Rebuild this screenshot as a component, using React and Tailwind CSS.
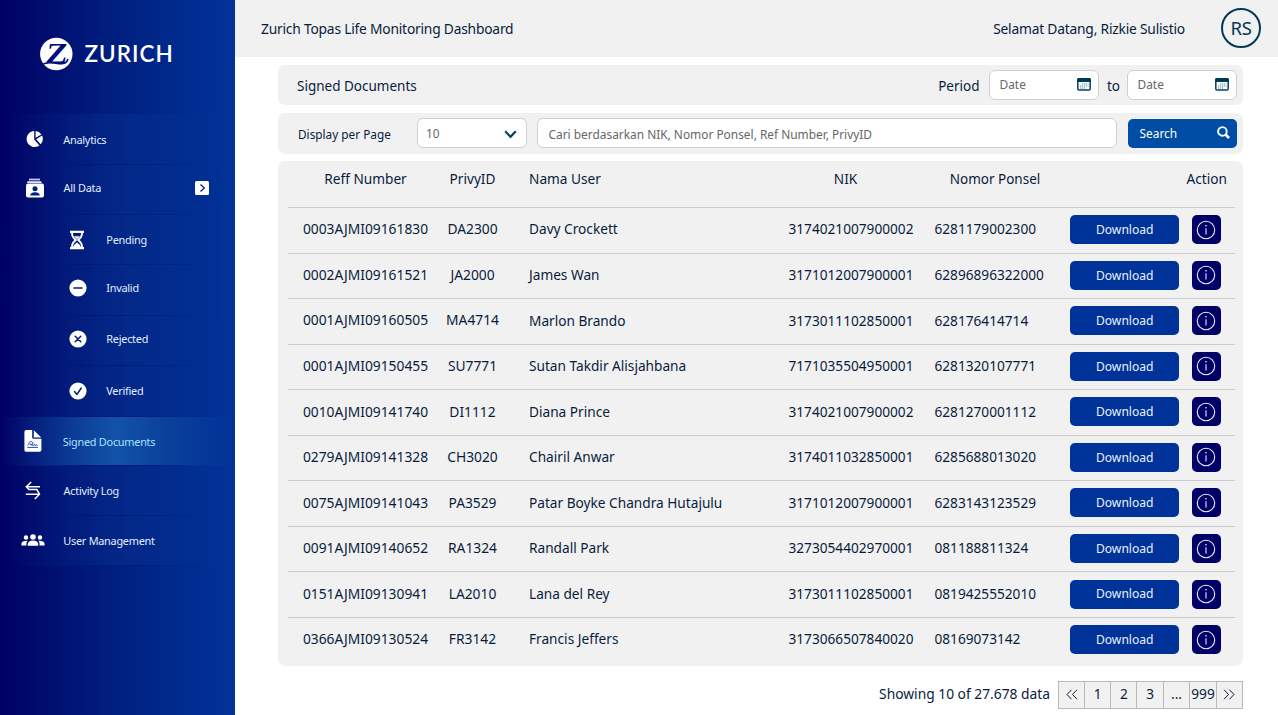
import React from "react";

const rows = [
  ["0003AJMI09161830", "DA2300", "Davy Crockett", "3174021007900002", "6281179002300"],
  ["0002AJMI09161521", "JA2000", "James Wan", "3171012007900001", "62896896322000"],
  ["0001AJMI09160505", "MA4714", "Marlon Brando", "3173011102850001", "628176414714"],
  ["0001AJMI09150455", "SU7771", "Sutan Takdir Alisjahbana", "7171035504950001", "6281320107771"],
  ["0010AJMI09141740", "DI1112", "Diana Prince", "3174021007900002", "6281270001112"],
  ["0279AJMI09141328", "CH3020", "Chairil Anwar", "3174011032850001", "6285688013020"],
  ["0075AJMI09141043", "PA3529", "Patar Boyke Chandra Hutajulu", "3171012007900001", "6283143123529"],
  ["0091AJMI09140652", "RA1324", "Randall Park", "3273054402970001", "081188811324"],
  ["0151AJMI09130941", "LA2010", "Lana del Rey", "3173011102850001", "0819425552010"],
  ["0366AJMI09130524", "FR3142", "Francis Jeffers", "3173066507840020", "08169073142"],
];

const GRID =
  "grid grid-cols-[155px_59px_27px_259.5px_146px_135px_109.5px_12.5px_29.5px] items-center";

function PieIcon() {
  return (
    <svg width="18" height="18" viewBox="0 0 18 18" fill="#fff">
      <path d="M8.2 1A8 8 0 1 0 13.4 15.4L8.2 9.6Z" />
      <path d="M9.6 1A8 8 0 0 1 15.4 4.4L9.6 7.8Z" />
      <path d="M16.1 5.6A8 8 0 0 1 14.6 14.2L10.2 9.2Z" />
    </svg>
  );
}

function AllDataIcon() {
  return (
    <svg width="20" height="20" viewBox="0 0 20 20">
      <rect x="4" y="0.6" width="11" height="1.8" fill="#c3c5e6" />
      <rect x="2.2" y="3.2" width="14.4" height="1.7" rx=".5" fill="#e4e6f6" />
      <rect x="1" y="5.6" width="18" height="14" rx="2" fill="#fff" />
      <circle cx="10" cy="10.800" r="2.500" fill="#001f80" />
      <path d="M5.200 17.600c.3-2.600 2-3.400 4.800-3.400s4.500.8 4.800 3.400Z" fill="#001f80" />
    </svg>
  );
}

function HourglassIcon() {
  return (
    <svg width="16" height="20" viewBox="0 0 16 20" fill="none" stroke="#fff">
      <path d="M1 1.800H15M1 18.200H15" strokeWidth="2.200" />
      <path d="M3 2.500C3 6.500 4 7.500 6.800 10C4 12.500 3 13.500 3 17.500M13 2.500C13 6.500 12 7.500 9.200 10C12 12.500 13 13.500 13 17.500" strokeWidth="1.900" />
      <path d="M5 6.200H11L8 9.300ZM4 17.500C4.500 14.500 6.500 14.200 8 12.200C9.500 14.200 11.500 14.500 12 17.500Z" fill="#fff" stroke="none" />
    </svg>
  );
}

function CircleIcon({ d }) {
  return (
    <svg width="18" height="18" viewBox="0 0 18 18">
      <circle cx="9" cy="9" r="8.600" fill="#fff" />
      <path d={d} fill="none" stroke="#001c7c" strokeWidth="1.500" strokeLinecap="round" strokeLinejoin="round" />
    </svg>
  );
}

function SignedIcon() {
  return (
    <svg width="18" height="22" viewBox="0 0 18 22">
      <path d="M2 0H8.200V7.500Q8.200 8.800 9.500 8.800H17.400V20Q17.400 21.800 15.600 21.800H2Q.4 21.800.4 20V2Q.4 0 2 0Z" fill="#fff" />
      <path d="M9.800 .3L17.300 7.600H9.800Z" fill="#fff" />
      <path d="M3.400 17.400H14M3.500 15.200C5 15 5 14 5 13C5.500 11 8.500 11 9 13C9 15 6 15.500 6.300 14.200C7 13 8.500 16 9.500 15.600C10 14 10.800 14 11 15.500C12 14.500 12.500 15.300 13.800 15.200" fill="none" stroke="#0b3a93" strokeWidth=".9" />
    </svg>
  );
}

function ActivityIcon() {
  return (
    <svg width="16" height="19" viewBox="0 0 16 19" fill="none" stroke="#fff" strokeWidth="1.500">
      <path d="M15 5.800H1.500M6.200 1L1.300 5.800L4 8.600H11.800L14.500 13.200L9.800 18M.8 13.200H14.500" />
    </svg>
  );
}

function UsersIcon() {
  return (
    <svg width="24" height="12" viewBox="0 0 24 12" fill="#fff">
      <circle cx="12" cy="3" r="2.800" />
      <circle cx="5" cy="3.500" r="2.200" />
      <circle cx="19" cy="3.500" r="2.200" />
      <path d="M6.800 11.800V10.200C6.800 7.800 9 6.600 12 6.600S17.200 7.800 17.200 10.200V11.800Z" />
      <path d="M.4 11.400V9.800C.4 7.500 3 6.500 6.700 6.700C5.600 7.800 5.400 9 5.400 11.400ZM23.600 11.400V9.800C23.600 7.500 21 6.500 17.300 6.700C18.400 7.800 18.600 9 18.600 11.400Z" />
    </svg>
  );
}

function CalendarIcon() {
  return (
    <svg width="14" height="13" viewBox="0 0 14 13">
      <rect x=".8" y=".8" width="12.400" height="11.200" rx="1.300" fill="#fff" stroke="#06415f" strokeWidth="1.500" />
      <path d="M.1 1.800Q.1.100 1.800.1H12.200Q13.900.1 13.900 1.800V4H.1Z" fill="#003a52" />
      <path d="M5 6H11.500M3 8H11.500M3 10H9" stroke="#5d8ba3" strokeWidth="1.100" strokeDasharray="1.300 .7" />
    </svg>
  );
}

const items = [
  { label: "Analytics", icon: <PieIcon />, h: "h-[50.5px] pt-[1px]", slot: "w-[63.300px] pl-[26px]" },
  { label: "All Data", icon: <AllDataIcon />, h: "h-[50.5px] pb-[3px]", slot: "w-[63.600px] pl-[24.500px]", arrow: true },
  { label: "Pending", icon: <HourglassIcon />, h: "h-[50px]", slot: "w-[106.300px] pl-[69px]" },
  { label: "Invalid", icon: <CircleIcon d="M5 9H13" />, h: "h-[50.5px] pb-[4px]", slot: "w-[106.300px] pl-[68.500px]" },
  { label: "Rejected", icon: <CircleIcon d="M6.200 6.200L11.800 11.800M11.800 6.200L6.200 11.800" />, h: "h-[50.5px] pb-[3px]", slot: "w-[106.300px] pl-[68.500px]" },
  { label: "Verified", icon: <CircleIcon d="M5.500 9.600L8 12.400L12.300 6" />, h: "h-[51px] pb-[1px]", slot: "w-[106.300px] pl-[68.500px]" },
  { label: "Signed Documents", icon: <SignedIcon />, h: "h-[49px]", slot: "w-[62.800px] pl-[23.500px]", active: true },
  { label: "Activity Log", icon: <ActivityIcon />, h: "h-[50px]", slot: "w-[63.600px] pl-[24.500px]" },
  { label: "User Management", icon: <UsersIcon />, h: "h-[50px] pb-[1px]", slot: "w-[63.300px] pl-[20.500px]" },
];

function Sidebar() {
  return (
    <aside className="flex w-[235px] shrink-0 flex-col bg-linear-to-r from-[#000064] via-[#001f80] via-50% to-[#003399]">
      <div className="flex h-[114px] items-start pt-[37px] pl-[40px]">
        <svg width="33" height="34" viewBox="0 0 33 34">
          <circle cx="16.300" cy="17" r="16.200" fill="#fff" />
          <text transform="translate(15.500 26) skewX(-8) scale(1.120 1)" textAnchor="middle" fontFamily="Liberation Serif, serif" fontWeight="700" fontSize="29" fill="#00107a">Z</text>
          <path d="M2 27.600C9 23.500 17 27.500 22 26.800C26 26.300 27.500 24.500 28 22" fill="none" stroke="#00107a" strokeWidth="1.500" />
        </svg>
        <span className="ml-[11.500px] font-[Lato,sans-serif] text-[22.500px] leading-[34px] font-semibold tracking-[1px] text-white">ZURICH</span>
      </div>
      <nav className="flex flex-col">
        {items.map((it) => (
          <div
            key={it.label}
            className={
              "flex items-center border-b [border-image:linear-gradient(90deg,transparent_8%,#00157a_35%,#00207f_65%,transparent_92%)_1] " +
              it.h + " " +
              (it.active
                ? "bg-linear-to-r from-transparent via-[#1253a8] via-50% to-transparent"
                : "bg-linear-to-r from-transparent via-[#0a3796]/35 via-55% to-transparent")
            }
          >
            <span className={"shrink-0 " + it.slot}>{it.icon}</span>
            <span className={"pt-px text-[10.900px] leading-[16px] tracking-[-0.260px] " + (it.active ? "text-[#a5e2ff]" : "text-[#e3eeff]")}>{it.label}</span>
            {it.arrow && (
              <svg className="mr-[26px] ml-auto" width="14" height="14" viewBox="0 0 14 14">
                <rect width="14" height="14" rx="1.500" fill="#fff" />
                <path d="M5.500 3.500L9.300 7L5.500 10.500" fill="none" stroke="#002a8c" strokeWidth="1.300" />
              </svg>
            )}
          </div>
        ))}
      </nav>
    </aside>
  );
}

const field = "flex items-center rounded-[6px] border border-[#cfcfcf] bg-white text-[#666]";

function DateField() {
  return (
    <div className={field + " h-[30px] w-[110px] justify-between pr-[7px] pl-[9.500px] text-[11.900px]"}>
      <span className="pt-px">Date</span>
      <CalendarIcon />
    </div>
  );
}

const cell = "flex h-[26px] items-center justify-center border-r border-[#b8b8b8]";

export default function App() {
  return (
    <div className="flex h-[715px] w-[1278px] overflow-hidden bg-white font-['Noto_Sans',sans-serif] whitespace-nowrap text-[#0a1c3d]">
      <Sidebar />
      <main className="flex flex-1 flex-col">
        <header className="flex h-[57px] items-center justify-between bg-[#f1f1f1] pr-[17px] pl-[26px] text-[13.800px] tracking-[-0.210px]">
          <span className="pt-px">Zurich Topas Life Monitoring Dashboard</span>
          <div className="flex items-center gap-[36px]">
            <span className="pt-px">Selamat Datang, Rizkie Sulistio</span>
            <span className="mb-[2px] flex size-[40px] items-center justify-center rounded-full border-2 border-[#003a56] text-[18.500px] text-[#003a56]">RS</span>
          </div>
        </header>
        <div className="flex w-[1007.500px] flex-col pt-[7.500px] pl-[42.500px]">
          <section className="flex h-[40.500px] items-center rounded-[7px] bg-[#f1f1f1] pr-[5.500px] pl-[19.500px] text-[13.500px]">
            <span className="pt-[2px]">Signed Documents</span>
            <span className="mr-[9.500px] ml-auto pt-[2px]">Period</span>
            <DateField />
            <span className="w-[28px] pt-[2px] pl-px text-center">to</span>
            <DateField />
          </section>
          <section className="mt-[7.500px] flex h-[41px] items-center rounded-[7px] bg-[#f1f1f1] pr-[5.500px] pl-[20.500px] text-[11.900px]">
            <span className="w-[119px] pt-[3px] text-[11.800px]">Display per Page</span>
            <div className={field + " h-[30px] w-[110px] justify-between pr-[9px] pl-[8px]"}>
              <span className="pt-[2px]">10</span>
              <svg className="mt-[2px]" width="13" height="9" viewBox="0 0 13 9"><path d="M1.200 1.300L6.500 6.800L11.800 1.300" fill="none" stroke="#06415f" strokeWidth="2.200" /></svg>
            </div>
            <div className={field + " ml-[10px] h-[30px] w-[580px] pt-[3px] pl-[10.500px]"}>Cari berdasarkan NIK, Nomor Ponsel, Ref Number, PrivyID</div>
            <button className="ml-auto flex h-[29px] w-[109px] items-center justify-between rounded-[5px] bg-[#004da5] pr-[7px] pl-[11.500px] text-white">
              <span className="pt-[2px]">Search</span>
              <svg className="mb-[2px]" width="13" height="13" viewBox="0 0 13 13" fill="none" stroke="#fff"><circle cx="5.400" cy="5.400" r="4.300" strokeWidth="1.900" /><path d="M8.600 8.600L12 12" strokeWidth="2.700" /></svg>
            </button>
          </section>
          <section className="mt-[7px] flex h-[505px] flex-col rounded-[7px] bg-[#f1f1f1] pr-[7.500px] pl-[10.500px] text-[13.660px]">
            <div className={GRID + " h-[46.600px] pb-[9.500px]"}>
              <span className="text-center">Reff Number</span>
              <span className="text-center">PrivyID</span>
              <span />
              <span>Nama User</span>
              <span className="w-[114px] text-center">NIK</span>
              <span className="w-[121px] text-center text-[13.500px]">Nomor Ponsel</span>
              <span className="col-span-3 -mr-[6px] text-right">Action</span>
            </div>
            {rows.map((r) => (
              <div key={r[0]} className={GRID + " h-[45.550px] border-t border-[#cdcdcd] pb-[1.400px]"}>
                <span className="text-center text-[13.800px]">{r[0]}</span>
                <span className="text-center text-[13.800px]">{r[1]}</span>
                <span />
                <span>{r[2]}</span>
                <span>{r[3]}</span>
                <span>{r[4]}</span>
                <button className="h-[29px] rounded-[5px] bg-[#003399] pt-px pl-px text-[12.100px] text-[#e8f1ff]">Download</button>
                <span />
                <button className="flex h-[29px] items-center justify-center rounded-[5px] bg-[#000066]">
                  <svg width="20" height="20" viewBox="0 0 20 20" fill="none" stroke="#e8ebff" strokeWidth="1.100"><circle cx="10" cy="10" r="8.700" /><path d="M10 8.200V14.500" /><circle cx="10" cy="5.800" r=".5" fill="#e8ebff" strokeWidth=".6" /></svg>
                </button>
              </div>
            ))}
          </section>
          <footer className="mt-[15px] flex items-center justify-end text-[13.660px]">
            <span className="mr-[7.500px] text-[13.800px]">Showing 10 of 27.678 data</span>
            <div className="grid grid-cols-[26px_26.500px_26px_26.500px_26px_27px_25px] border border-[#b8b8b8] bg-[#f1f1f1]">
              <span className={cell}><svg className="ml-px" width="12" height="11" viewBox="0 0 12 11" fill="none" stroke="#0a1c3d"><path d="M5.500 .8L1 5.500L5.500 10.200M11 .8L6.500 5.500L11 10.200" /></svg></span>
              <span className={cell + " pl-px"}>1</span>
              <span className={cell + " pl-px"}>2</span>
              <span className={cell + " pl-px"}>3</span>
              <span className={cell + " pl-px"}>...</span>
              <span className={cell + " pl-px"}>999</span>
              <span className="flex items-center justify-center"><svg width="12" height="11" viewBox="0 0 12 11" fill="none" stroke="#0a1c3d"><path d="M1 .8L5.500 5.500L1 10.200M6.500 .8L11 5.500L6.500 10.200" /></svg></span>
            </div>
          </footer>
        </div>
      </main>
    </div>
  );
}
